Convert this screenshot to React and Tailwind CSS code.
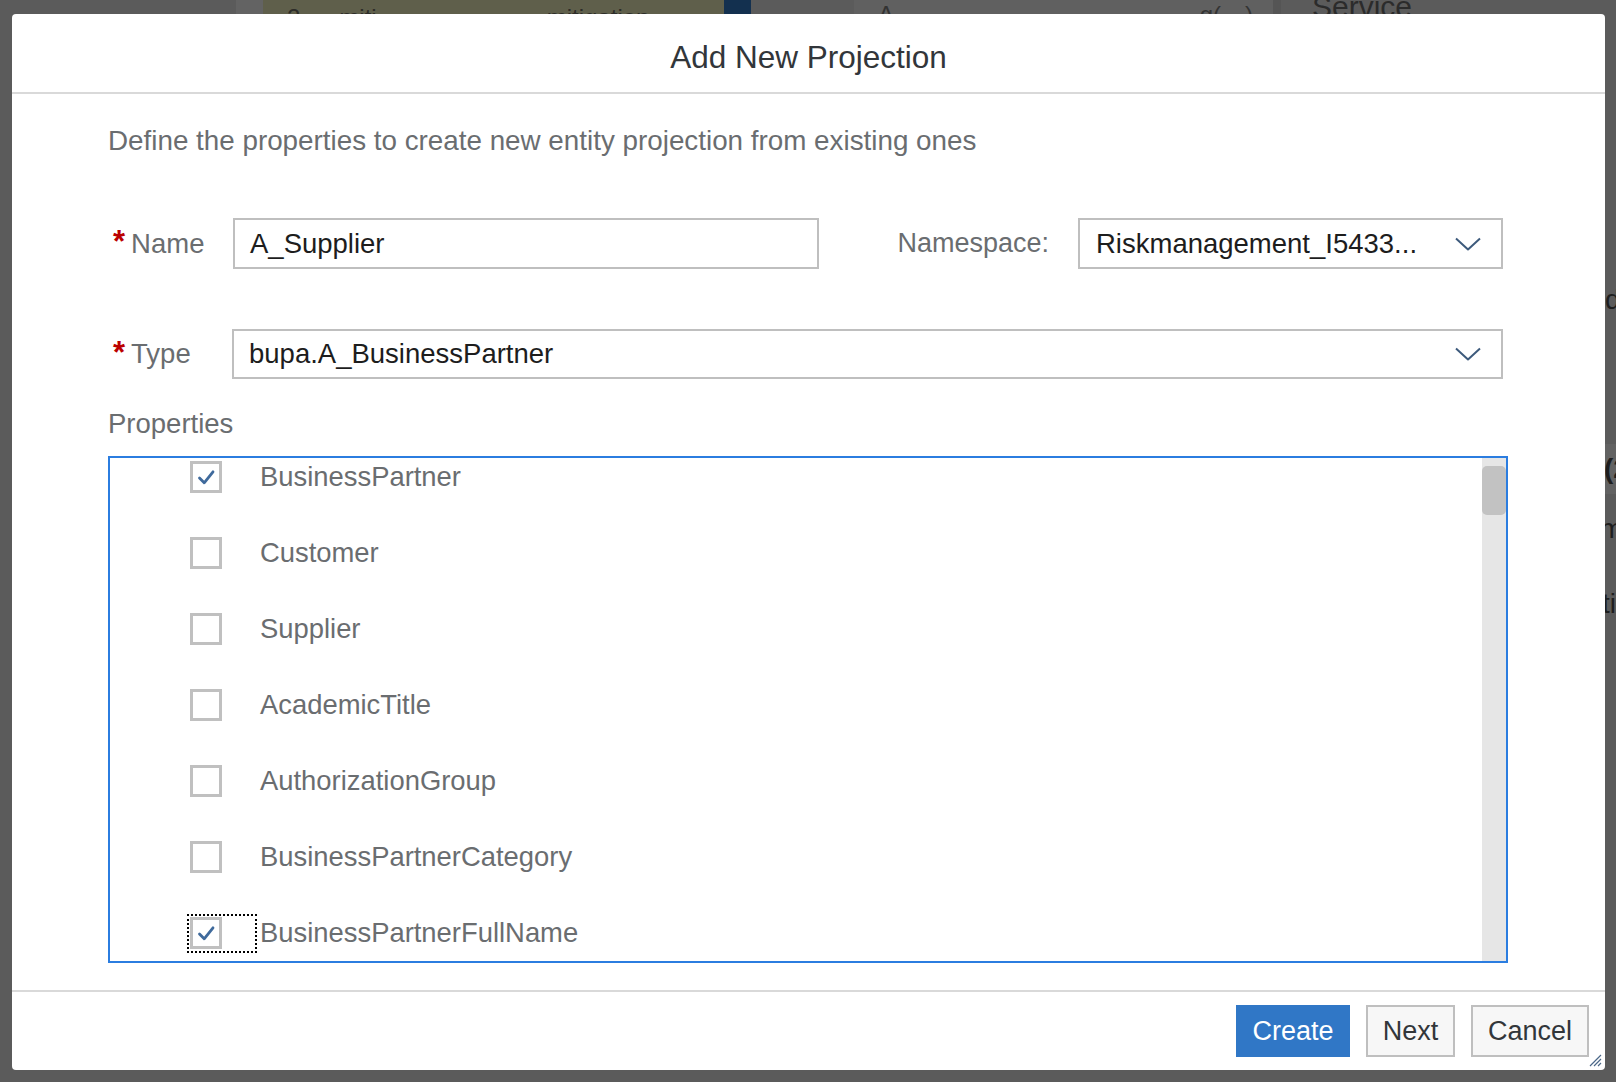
import React from 'react'

const properties = [
  { name: 'BusinessPartner', checked: true },
  { name: 'Customer', checked: false },
  { name: 'Supplier', checked: false },
  { name: 'AcademicTitle', checked: false },
  { name: 'AuthorizationGroup', checked: false },
  { name: 'BusinessPartnerCategory', checked: false },
  { name: 'BusinessPartnerFullName', checked: true, focused: true },
  { name: 'BusinessPartnerGrouping', checked: false },
]

const Chevron = () => (
  <svg width="28" height="16" viewBox="0 0 28 16" fill="none">
    <path d="M2 2.5 L14 13.5 L26 2.5" stroke="#3d5a7c" strokeWidth="2" strokeLinejoin="round" />
  </svg>
)

const Check = () => (
  <svg width="19" height="17" viewBox="0 0 19 17" fill="none">
    <path d="M2.5 9 L7.2 13.8 L16 2.8" stroke="#3f6a9c" strokeWidth="2.8" strokeLinecap="round" strokeLinejoin="round" />
  </svg>
)

const Required = ({ children }) => (
  <div className="w-[125px] pl-[5px] flex items-center text-[27.5px] text-[#6a6d70]">
    <span className="text-[#bb0000] font-bold text-[31px] mr-[6px] -mt-[2px]">*</span>
    {children}
  </div>
)

const PropertyRow = ({ item }) => (
  <div className="h-[76px] flex items-center">
    <div
      className={`w-[70px] h-[39px] pl-[1px] flex items-center ${
        item.focused ? 'border-2 border-dotted border-black' : 'border-2 border-transparent'
      }`}
    >
      <div className="w-[32px] h-[32px] border-[3px] border-[#c0c0c0] bg-white flex items-center justify-center">
        {item.checked && <Check />}
      </div>
    </div>
    <span className="ml-[3px] text-[27.4px] text-[#6a6d70]">{item.name}</span>
  </div>
)

const Button = ({ children, primary, width }) => (
  <button
    className={`${width} h-[52px] text-[27px] flex items-center justify-center ${
      primary
        ? 'bg-[#3077c6] text-white border-2 border-[#3077c6]'
        : 'bg-[#f7f7f7] text-[#32363a] border-2 border-[#bfbfbf]'
    }`}
  >
    {children}
  </button>
)

export default function App() {
  return (
    <div className="relative w-[1616px] h-[1082px] overflow-hidden bg-[#5b5b5b] font-['Liberation_Sans',Arial,sans-serif]">
      {/* page behind the dialog */}
      <div className="flex flex-col h-full">
        <div className="flex h-[14px] overflow-hidden text-[#2c2c28] text-[24px] leading-none">
          <div className="w-[236px]" />
          <div className="w-[27px] bg-[#636363]" />
          <div className="w-[461px] bg-[#5f5f4b] flex pt-[6px]">
            <span className="ml-[24px]">2</span>
            <span className="ml-[39px]">miti</span>
            <span className="ml-[170px]">mitigation</span>
          </div>
          <div className="w-[27px] bg-[#13304f]" />
          <div className="w-[103px]" />
          <div className="w-[419px] bg-[#606060] flex justify-between pt-[3px] pl-[24px] pr-[20px] text-[#333]">
            <span>A</span>
            <span>g(…)</span>
          </div>
          <div className="w-[8px] bg-[#555]" />
          <div className="flex-1 pl-[31px] -mt-[8px] text-[30px] text-[#2b2b2b]">Service</div>
        </div>
        <div className="flex flex-1">
          <div className="flex-1" />
          <div className="w-[12px] overflow-hidden flex flex-col text-[28px] text-[#1e1e1e] leading-[32px]">
            <div className="h-[270px]" />
            <span className="pl-[1px]">d</span>
            <div className="h-[128px]" />
            <div className="h-[50px] bg-[#626262] flex items-center font-bold">(2</div>
            <div className="h-[19px]" />
            <span className="-ml-[4px]">m</span>
            <div className="h-[43px]" />
            <span className="-ml-[2px]">ti</span>
          </div>
        </div>
      </div>

      {/* dialog */}
      <div className="absolute left-[12px] top-[14px] w-[1593px] h-[1056px] bg-white rounded-[4px] flex flex-col">
        <div className="h-[80px] pt-[10px] border-b-2 border-[#d9d9d9] flex items-center justify-center text-[31.5px] text-[#32363a]">
          Add New Projection
        </div>

        <div className="flex-1 pl-[96px] pr-[97px] pt-[31px] flex flex-col">
          <p className="text-[27.8px] leading-[32px] text-[#6a6d70]">
            Define the properties to create new entity projection from existing ones
          </p>

          <div className="mt-[61px] mr-[5px] flex items-center h-[51px]">
            <Required>Name</Required>
            <div className="w-[586px] h-[51px] border-2 border-[#bfbfbf] pl-[15px] flex items-center text-[27.5px] text-[#1d1d1d]">
              A_Supplier
            </div>
            <div className="flex-1 flex justify-end pr-[29px] text-[27px] text-[#6a6d70]">Namespace:</div>
            <div className="w-[425px] h-[51px] border-2 border-[#bfbfbf] pl-[16px] pr-[19px] flex items-center justify-between text-[27.5px] text-[#1d1d1d]">
              <span>Riskmanagement_I5433...</span>
              <Chevron />
            </div>
          </div>

          <div className="mt-[60px] mr-[5px] flex items-center h-[50px]">
            <Required>Type</Required>
            <div className="flex-1 -ml-[1px] h-[50px] border-2 border-[#bfbfbf] pl-[15px] pr-[19px] flex items-center justify-between text-[27.5px] text-[#1d1d1d]">
              <span>bupa.A_BusinessPartner</span>
              <Chevron />
            </div>
          </div>

          <div className="mt-[29px] text-[27.5px] leading-[32px] text-[#6a6d70]">Properties</div>

          <div className="mt-[16px] h-[507px] border-2 border-[#2b7de0] flex">
            <div className="flex-1 overflow-hidden pl-[77px]">
              <div className="-mt-[19px]">
                {properties.map((p) => (
                  <PropertyRow key={p.name} item={p} />
                ))}
              </div>
            </div>
            <div className="w-[24px] bg-[#e6e6e6] pt-[8px]">
              <div className="h-[49px] rounded-[5px] bg-[#c2c2c2]" />
            </div>
          </div>
        </div>

        <div className="relative h-[80px] border-t-2 border-[#d9d9d9] flex items-center justify-end gap-[16px] pr-[16px]">
          <Button primary width="w-[114px]">Create</Button>
          <Button width="w-[89px]">Next</Button>
          <Button width="w-[118px]">Cancel</Button>
          <svg className="absolute right-[3px] bottom-[3px]" width="14" height="14" viewBox="0 0 14 14" fill="none">
            <path d="M13 2 L2 13 M13 6 L6 13 M13 10 L10 13" stroke="#4b6788" strokeWidth="1.2" />
          </svg>
        </div>
      </div>
    </div>
  )
}
